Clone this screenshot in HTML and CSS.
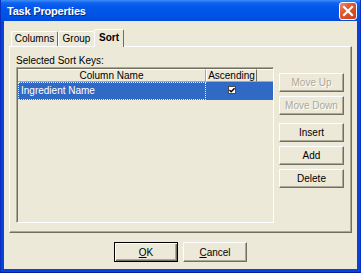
FILE: index.html
```html
<!DOCTYPE html>
<html lang="en">
<head>
    <meta charset="UTF-8">
    <title>Task Properties</title>
    <link rel="stylesheet" href="styles.css">
</head>
<body>
    <div class="window">
        <div class="titlebar">
            <span class="title">Task Properties</span>
            <div class="close-btn">
                <svg width="16" height="16" viewBox="0 0 16 16">
                    <path d="M4 4 L12 12 M12 4 L4 12" stroke="#fff" stroke-width="2.2" stroke-linecap="square" fill="none"/>
                </svg>
            </div>
        </div>
        <div class="client">
            <div class="tabs">
                <div class="tab tab-columns">Columns</div>
                <div class="tab tab-group">Group</div>
                <div class="tab tab-sort active">Sort</div>
            </div>
            <div class="panel">
                <div class="label">Selected Sort Keys:</div>
                <div class="panel-body">
                    <div class="list">
                        <div class="list-header">
                            <div class="head head-name">Column Name</div>
                            <div class="head head-asc">Ascending</div>
                            <div class="head head-fill"></div>
                        </div>
                        <div class="list-row selected">
                            <div class="cell cell-name">Ingredient Name</div>
                            <div class="cell cell-asc">
                                <span class="check">
                                    <svg width="7" height="7" viewBox="0 0 7 7">
                                        <path d="M0.5 3 L2.5 5 L6.5 1" stroke="#000" stroke-width="1.6" fill="none"/>
                                    </svg>
                                </span>
                            </div>
                        </div>
                    </div>
                    <div class="side-buttons">
                        <button class="btn" disabled>Move Up</button>
                        <button class="btn" disabled>Move Down</button>
                        <button class="btn btn-insert">Insert</button>
                        <button class="btn">Add</button>
                        <button class="btn">Delete</button>
                    </div>
                </div>
            </div>
            <div class="dialog-buttons">
                <button class="btn btn-dialog default"><u>O</u>K</button>
                <button class="btn btn-dialog"><u>C</u>ancel</button>
            </div>
        </div>
    </div>
</body>
</html>
```

FILE: styles.css
```css
* {
    box-sizing: border-box;
}
body {
    margin: 0;
    font-family: Tahoma, "Liberation Sans", Arial, sans-serif;
    font-size: 10px;
    color: #000;
}
.window {
    width: 361px;
    height: 273px;
    background: #0843D9;
    padding: 0 3px 3px;
    display: flex;
    flex-direction: column;
    border-left: 1px solid #0A2FC0;
    border-right: 1px solid #0A2FC0;
    border-bottom: 1px solid #001EA0;
}
.titlebar {
    height: 22px;
    margin: 0 -3px;
    padding: 0 3px 0 6px;
    display: flex;
    align-items: center;
    justify-content: space-between;
    background: linear-gradient(to bottom, #3D8DF8 0, #0F62F0 3px, #0257EA 8px, #0053E4 16px, #0049D9 22px);
}
.title {
    color: #fff;
    font-weight: bold;
    font-size: 11px;
    letter-spacing: -0.2px;
    text-shadow: 1px 1px #0A2A8A;
}
.close-btn {
    width: 18px;
    height: 18px;
    margin-top: 1px;
    border: 1px solid #fff;
    border-radius: 3px;
    background: linear-gradient(135deg, #EE8A6A 0, #E0572F 40%, #C8411C 100%);
    display: flex;
    align-items: center;
    justify-content: center;
}
.client {
    flex: 1;
    background: #ECE9D8;
    padding: 8px 5px 7px;
    display: flex;
    flex-direction: column;
}
.tabs {
    display: flex;
    align-items: flex-end;
    height: 17px;
    padding-left: 2px;
    position: relative;
    z-index: 1;
}
.tab {
    height: 15px;
    line-height: 14px;
    text-align: center;
    background: #ECE9D8;
    border: 1px solid;
    border-color: #fff #716F64 transparent #fff;
    border-bottom: none;
    border-radius: 2px 2px 0 0;
}
.tab-columns {
    width: 47px;
}
.tab-group {
    width: 36px;
    border-right: none;
}
.tab-sort {
    width: 30px;
}
.tab.active {
    height: 18px;
    line-height: 16px;
    margin-bottom: -1px;
    font-weight: bold;
}
.panel {
    height: 187px;
    border: 1px solid;
    border-color: #fff #716F64 #716F64 #fff;
    box-shadow: inset -1px -1px #ACA899;
    padding: 7px 0 0 6px;
}
.label {
    height: 13px;
    line-height: 13px;
}
.panel-body {
    display: flex;
    gap: 5px;
}
.list {
    width: 258px;
    height: 156px;
    border: 1px solid;
    border-color: #ACA899 #fff #fff #ACA899;
    box-shadow: inset 1px 1px #716F64;
    padding: 1px 0 0 1px;
}
.list-header {
    display: flex;
    height: 13px;
}
.head {
    line-height: 12px;
    text-align: center;
    border-top: 1px solid #fff;
    border-bottom: 1px solid #ACA899;
}
.head-name {
    width: 188px;
    border-right: 1px solid #ACA899;
}
.head-asc {
    width: 51px;
    border-left: 1px solid #fff;
    border-right: 1px solid #716F64;
}
.head-fill {
    flex: 1;
}
.list-row {
    display: flex;
    height: 18px;
}
.list-row.selected {
    background: #316AC5;
    color: #fff;
}
.cell {
    line-height: 16px;
}
.cell-name {
    width: 188px;
    padding-left: 2px;
    border: 1px dotted #F3EFC8;
}
.cell-asc {
    width: 51px;
    display: flex;
    justify-content: center;
    padding-top: 4px;
}
.check {
    width: 8px;
    height: 8px;
    background: #fff;
    border: 1px solid #4A4A4A;
    display: flex;
    align-items: center;
    justify-content: center;
}
.side-buttons {
    width: 65px;
    margin-top: 6px;
    display: flex;
    flex-direction: column;
    gap: 4px;
}
.btn {
    height: 19px;
    padding: 0;
    font-family: inherit;
    font-size: 10px;
    color: #000;
    background: #ECE9D8;
    border: 1px solid;
    border-color: #fff #716F64 #716F64 #fff;
    box-shadow: inset -1px -1px #ACA899;
    border-radius: 0;
}
.btn:disabled {
    color: #ACA899;
    text-shadow: 1px 1px #fff;
}
.btn-insert {
    margin-top: 4px;
}
.dialog-buttons {
    display: flex;
    justify-content: center;
    gap: 5px;
    margin-top: 9px;
}
.btn-dialog {
    width: 64px;
    height: 20px;
}
.btn-dialog.default {
    border-color: #000;
    box-shadow: inset 1px 1px #fff, inset -1px -1px #716F64, inset -2px -2px #ACA899;
}
```
